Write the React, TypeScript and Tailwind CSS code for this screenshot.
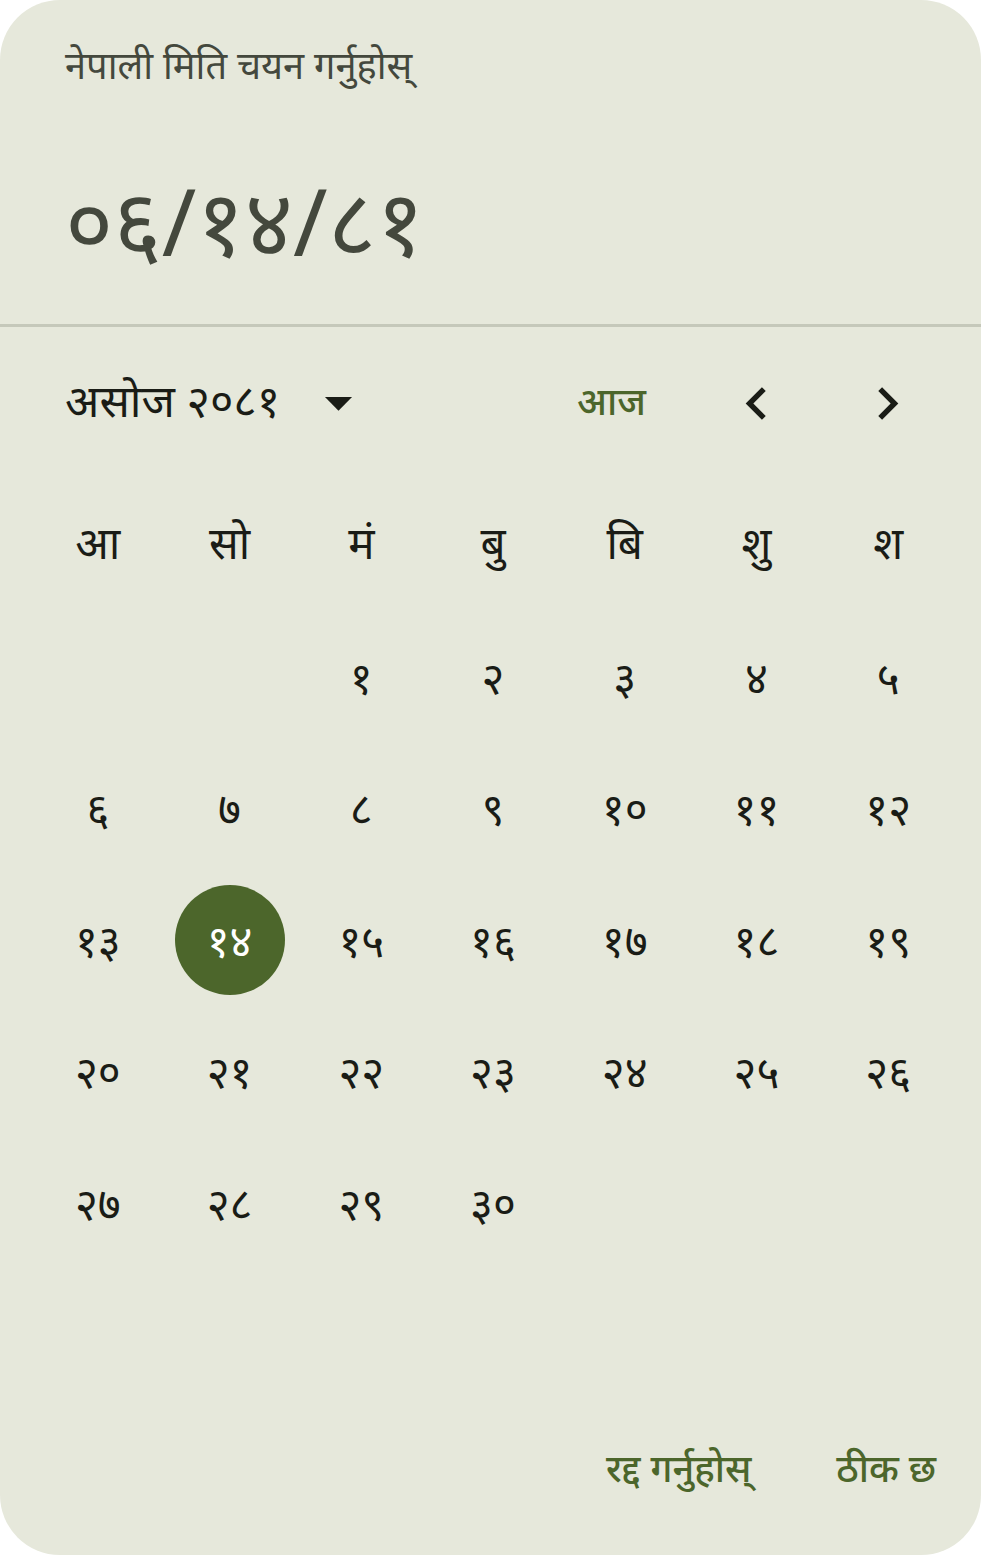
import React from "react";

const days = ["आ", "सो", "मं", "बु", "बि", "शु", "श"];
const nums = ["१", "२", "३", "४", "५", "६", "७", "८", "९", "१०", "११", "१२", "१३", "१४", "१५", "१६", "१७", "१८", "१९", "२०", "२१", "२२", "२३", "२४", "२५", "२६", "२७", "२८", "२९", "३०"];

export default function App() {
  const cells: (string | null)[] = [null, null, ...nums];
  while (cells.length < 42) cells.push(null);
  return (
    <div
      className="w-[981px] h-[1556px] bg-white"
      style={{ fontFamily: '"Noto Sans", "Noto Sans Devanagari", sans-serif' }}
    >
      <div className="w-[981px] h-[1555px] rounded-[60px] bg-[#e6e8db] flex flex-col overflow-hidden">
        {/* header */}
        <div className="h-[324px] flex flex-col pl-[65px]">
          <div className="pt-[38px] h-[90px] text-[38px] leading-[52px] text-[#44483d]">
            नेपाली मिति चयन गर्नुहोस्
          </div>
          <div className="mt-[80px] text-[93px] leading-[100px] text-[#44483d]">०६/१४/८१</div>
        </div>
        <div className="h-[3px] bg-[#c5c8ba]" />
        {/* month row */}
        <div className="h-[146px] flex items-center">
          <div className="pl-[65px] flex items-center">
            <span className="text-[45px] leading-[58px] text-[#1a1c16]">असोज २०८१</span>
            <svg width="65" height="65" viewBox="0 0 24 24" className="ml-[26px] mt-[4px]">
              <path d="M7 10l5 5 5-5z" fill="#1a1c16" />
            </svg>
          </div>
          <div className="flex-1" />
          <div className="w-[131px] flex justify-center text-[38px] leading-[52px] font-medium text-[#4c662b] mr-[14px]">आज</div>
          <div className="w-[131px] h-[131px] flex items-center justify-center pt-[6px]">
            <svg width="65" height="65" viewBox="0 0 24 24">
              <path d="M15.41 7.41L14 6l-6 6 6 6 1.41-1.41L10.83 12z" fill="#1a1c16" />
            </svg>
          </div>
          <div className="w-[131px] h-[131px] flex items-center justify-center mr-[28px] pt-[6px]">
            <svg width="65" height="65" viewBox="0 0 24 24">
              <path d="M10 6L8.59 7.41 13.17 12l-4.58 4.59L10 18l6-6z" fill="#1a1c16" />
            </svg>
          </div>
        </div>
        {/* grid */}
        <div className="pl-[32px] pr-[27px]">
          <div className="grid grid-cols-7 h-[138px]">
            {days.map((d) => (
              <div key={d} className="flex items-center justify-center text-[44px] leading-[56px] text-[#1a1c16]">
                {d}
              </div>
            ))}
          </div>
          <div className="grid grid-cols-7 auto-rows-[131.5px]">
            {cells.map((c, i) => (
              <div key={i} className="flex items-center justify-center">
                {c === "१४" ? (
                  <div className="w-[110px] h-[110px] rounded-full bg-[#4c662b] flex items-center justify-center text-[44px] leading-[56px] text-white">
                    {c}
                  </div>
                ) : c ? (
                  <span className="text-[44px] leading-[56px] text-[#1a1c16]">{c}</span>
                ) : null}
              </div>
            ))}
          </div>
        </div>
        {/* actions */}
        <div className="flex justify-end items-center gap-[85px] pr-[45px] pt-[41px]">
          <span className="text-[38px] leading-[52px] font-medium text-[#4c662b]">रद्द गर्नुहोस्</span>
          <span className="text-[38px] leading-[52px] font-medium text-[#4c662b]">ठीक छ</span>
        </div>
      </div>
    </div>
  );
}
